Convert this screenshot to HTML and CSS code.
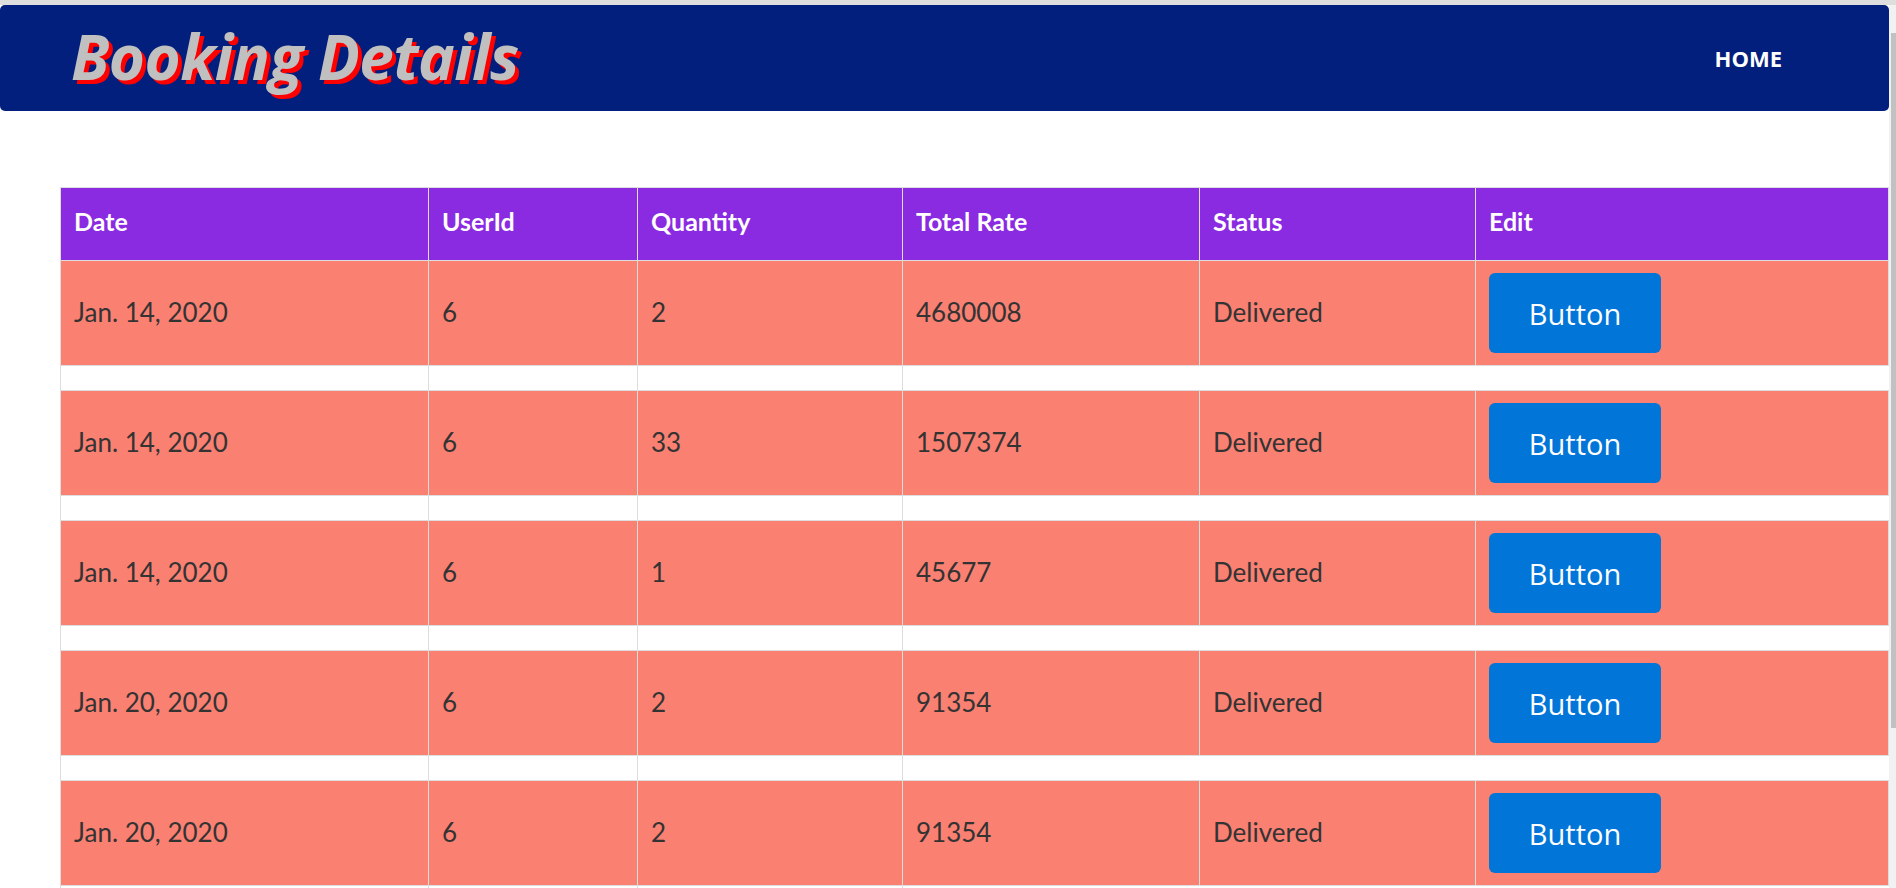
FILE: index.html
```html
<!DOCTYPE html>
<html lang="en">
<head>
<meta charset="utf-8">
<title>Booking Details</title>
<link rel="stylesheet" href="styles.css">
</head>
<body>
<div class="topline"></div>
<div class="page">
  <header class="topbar">
    <h1 class="title">Booking Details</h1>
    <nav class="nav"><a class="nav-link" href="#">HOME</a></nav>
  </header>
  <main class="content">
    <table class="bookings">
      <thead>
        <tr>
          <th>Date</th><th>UserId</th><th>Quantity</th><th>Total Rate</th><th>Status</th><th>Edit</th>
        </tr>
      </thead>
      <tbody>
        <tr class="row"><td>Jan. 14, 2020</td><td>6</td><td>2</td><td>4680008</td><td>Delivered</td><td><button class="btn">Button</button></td></tr>
        <tr class="spacer"><td></td><td></td><td></td></tr>
        <tr class="row"><td>Jan. 14, 2020</td><td>6</td><td>33</td><td>1507374</td><td>Delivered</td><td><button class="btn">Button</button></td></tr>
        <tr class="spacer"><td></td><td></td><td></td></tr>
        <tr class="row"><td>Jan. 14, 2020</td><td>6</td><td>1</td><td>45677</td><td>Delivered</td><td><button class="btn">Button</button></td></tr>
        <tr class="spacer"><td></td><td></td><td></td></tr>
        <tr class="row"><td>Jan. 20, 2020</td><td>6</td><td>2</td><td>91354</td><td>Delivered</td><td><button class="btn">Button</button></td></tr>
        <tr class="spacer"><td></td><td></td><td></td></tr>
        <tr class="row"><td>Jan. 20, 2020</td><td>6</td><td>2</td><td>91354</td><td>Delivered</td><td><button class="btn">Button</button></td></tr>
        <tr class="spacer"><td></td><td></td><td></td></tr>
      </tbody>
    </table>
  </main>
</div>
<div class="scrollbar"><div class="scrollbar-thumb"></div></div>
</body>
</html>
```

FILE: styles.css
```css
html, body {
  margin: 0;
  padding: 0;
  height: 888px;
  overflow: hidden;
  background: #ffffff;
}

body {
  font-family: "Lato", "Open Sans", sans-serif;
}

.topline {
  height: 5px;
  background: #dedede;
}

.page {
  width: 1889px;
}

.topbar {
  height: 106px;
  background: #031f7e;
  border-radius: 5px;
  display: flex;
  align-items: center;
  justify-content: space-between;
  padding: 0 107px 0 71px;
  box-sizing: border-box;
}

.title {
  margin: 0 0 4px 0;
  font-family: "Open Sans", sans-serif;
  font-style: italic;
  font-weight: 700;
  font-size: 62px;
  line-height: 1;
  letter-spacing: -0.6px;
  color: #c0c0c0;
  text-shadow: 4px 4px 0 #ff0000;
}

.nav-link {
  font-family: "Open Sans", sans-serif;
  font-weight: 700;
  font-size: 22px;
  color: #ffffff;
  text-decoration: none;
}

.content {
  padding: 76px 0 0 60px;
}

.bookings {
  width: 1829px;
  border-collapse: collapse;
  table-layout: fixed;
}

.bookings th,
.bookings td {
  box-sizing: border-box;
  border: 1px solid #dddddd;
  text-align: left;
  vertical-align: middle;
  padding: 12px 13px;
}

.bookings th {
  height: 73px;
  padding: 8px 13px 14px;
  background: #8a2be2;
  color: #ffffff;
  font-weight: 700;
  font-size: 25px;
}

.bookings th:nth-child(1) { width: 368px; }
.bookings th:nth-child(2) { width: 209px; }
.bookings th:nth-child(3) { width: 265px; }
.bookings th:nth-child(4) { width: 297px; }
.bookings th:nth-child(5) { width: 276px; }

.row td {
  background: #fa8072;
  color: #333333;
  font-size: 26px;
  height: 105px;
  padding-top: 11px;
  padding-bottom: 13px;
}

.row td:last-child {
  padding-top: 12px;
  padding-bottom: 12px;
}

.spacer td {
  height: 25px;
  padding: 0;
  background: #ffffff;
}

.btn {
  display: block;
  width: 172px;
  height: 80px;
  border: none;
  border-radius: 6px;
  background: #0275d8;
  color: #ffffff;
  font-family: "Open Sans", sans-serif;
  font-size: 29px;
  padding: 0;
}

.scrollbar {
  position: fixed;
  top: 5px;
  right: 0;
  bottom: 0;
  width: 7px;
  background: #f1f1f1;
}

.scrollbar-thumb {
  position: absolute;
  top: 28px;
  right: 0;
  width: 5px;
  height: 695px;
  background: #c1c1c1;
}
```
